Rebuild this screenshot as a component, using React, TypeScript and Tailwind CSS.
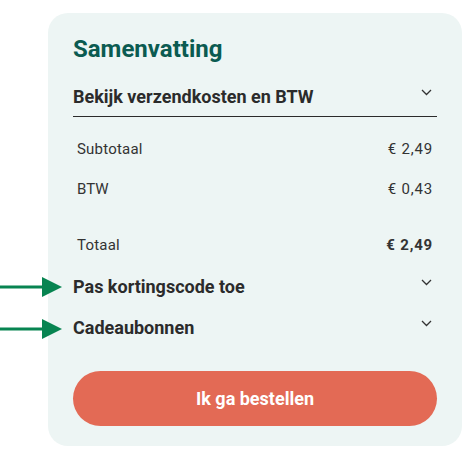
import React from "react";

const Chevron = () => (
  <svg width="11" height="7" viewBox="0 0 11 7" className="mt-[4px] mr-[5px] shrink-0">
    <path d="M1 1 L5.5 5.5 L10 1" fill="none" stroke="#333" strokeWidth="1.3" />
  </svg>
);

const Arrow = ({ top }: { top: string }) => (
  <svg width="64" height="22" viewBox="0 0 64 22" className={`absolute left-0 ${top}`}>
    <rect x="0" y="9.5" width="44" height="3" fill="#078451" />
    <polygon points="42,1 62,11 42,21" fill="#078451" />
  </svg>
);

export default function App() {
  return (
    <div className="relative w-[474px] h-[460px] bg-white" style={{ fontFamily: "Roboto, 'Liberation Sans', sans-serif" }}>
      <div className="ml-[48px] pt-[13px]">
        <div className="w-[414px] h-[433px] rounded-[20px] bg-[#edf5f4] px-[25px] pt-[22px] flex flex-col">
          <h2 className="text-[24px] leading-[28px] font-bold text-[#0b5b51]">Samenvatting</h2>
          <div className="mt-[22px] flex justify-between border-b border-[#2b2b2b] pb-[7px]">
            <span className="text-[18px] leading-[24px] font-bold text-[#2b2b2b]">Bekijk verzendkosten en BTW</span>
            <Chevron />
          </div>
          <div className="px-[4px] text-[15px] leading-[20px] text-[#333]">
            <div className="mt-[22px] flex justify-between">
              <span className="tracking-[0.2px]">Subtotaal</span>
              <span className="tracking-[0.8px]">€ 2,49</span>
            </div>
            <div className="mt-[20px] flex justify-between">
              <span>BTW</span>
              <span className="tracking-[0.8px]">€ 0,43</span>
            </div>
            <div className="mt-[36px] flex justify-between">
              <span className="tracking-[0.2px]">Totaal</span>
              <span className="font-bold tracking-[0.8px]">€ 2,49</span>
            </div>
          </div>
          <div className="mt-[20px] flex justify-between">
            <span className="text-[18px] leading-[24px] font-bold text-[#2b2b2b]">Pas kortingscode toe</span>
            <Chevron />
          </div>
          <div className="mt-[17px] flex justify-between">
            <span className="text-[18px] leading-[24px] font-bold text-[#2b2b2b]">Cadeaubonnen</span>
            <Chevron />
          </div>
          <button className="mt-[31px] h-[55px] w-full rounded-full bg-[#e36a55] text-white text-[18px] font-bold">
            Ik ga bestellen
          </button>
        </div>
      </div>
      <Arrow top="top-[276px]" />
      <Arrow top="top-[318px]" />
    </div>
  );
}
